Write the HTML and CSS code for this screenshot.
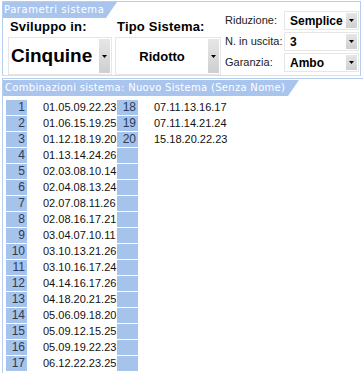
FILE: index.html
```html
<!DOCTYPE html>
<html lang="it">
<head>
    <meta charset="UTF-8">
    <title>Parametri sistema</title>
    <link rel="stylesheet" href="styles.css">
</head>
<body>
    <div class="params">
        <div class="params-main">
            <div class="tab tab-params">Parametri sistema</div>
            <div class="big-fields">
                <div class="field field-sviluppo">
                    <div class="field-label">Sviluppo in:</div>
                    <div class="combo combo-big">
                        <span class="combo-value value-left">Cinquine</span>
                        <span class="combo-btn"><svg width="5" height="3" viewBox="0 0 5 3"><path d="M0 0h5L2.5 3z" fill="#000"/></svg></span>
                    </div>
                </div>
                <div class="field field-tipo">
                    <div class="field-label">Tipo Sistema:</div>
                    <div class="combo combo-big">
                        <span class="combo-value value-center">Ridotto</span>
                        <span class="combo-btn"><svg width="5" height="3" viewBox="0 0 5 3"><path d="M0 0h5L2.5 3z" fill="#000"/></svg></span>
                    </div>
                </div>
            </div>
        </div>
        <div class="params-side">
            <span class="side-label">Riduzione:</span>
            <div class="combo combo-small">
                <span class="combo-value">Semplice</span>
                <span class="combo-btn"><svg width="5" height="3" viewBox="0 0 5 3"><path d="M0 0h5L2.5 3z" fill="#000"/></svg></span>
            </div>
            <span class="side-label">N. in uscita:</span>
            <div class="combo combo-small">
                <span class="combo-value">3</span>
                <span class="combo-btn"><svg width="5" height="3" viewBox="0 0 5 3"><path d="M0 0h5L2.5 3z" fill="#000"/></svg></span>
            </div>
            <span class="side-label">Garanzia:</span>
            <div class="combo combo-small">
                <span class="combo-value">Ambo</span>
                <span class="combo-btn"><svg width="5" height="3" viewBox="0 0 5 3"><path d="M0 0h5L2.5 3z" fill="#000"/></svg></span>
            </div>
        </div>
    </div>

    <div class="combos">
        <div class="tab tab-combos">Combinazioni sistema: Nuovo Sistema (Senza Nome)</div>
        <div class="combo-grid">
            <div class="idx">1</div><div class="num">01.05.09.22.23</div><div class="idx">18</div><div class="num">07.11.13.16.17</div>
            <div class="idx">2</div><div class="num">01.06.15.19.25</div><div class="idx">19</div><div class="num">07.11.14.21.24</div>
            <div class="idx">3</div><div class="num">01.12.18.19.20</div><div class="idx">20</div><div class="num">15.18.20.22.23</div>
            <div class="idx">4</div><div class="num">01.13.14.24.26</div><div class="idx"></div><div class="num"></div>
            <div class="idx">5</div><div class="num">02.03.08.10.14</div><div class="idx"></div><div class="num"></div>
            <div class="idx">6</div><div class="num">02.04.08.13.24</div><div class="idx"></div><div class="num"></div>
            <div class="idx">7</div><div class="num">02.07.08.11.26</div><div class="idx"></div><div class="num"></div>
            <div class="idx">8</div><div class="num">02.08.16.17.21</div><div class="idx"></div><div class="num"></div>
            <div class="idx">9</div><div class="num">03.04.07.10.11</div><div class="idx"></div><div class="num"></div>
            <div class="idx">10</div><div class="num">03.10.13.21.26</div><div class="idx"></div><div class="num"></div>
            <div class="idx">11</div><div class="num">03.10.16.17.24</div><div class="idx"></div><div class="num"></div>
            <div class="idx">12</div><div class="num">04.14.16.17.26</div><div class="idx"></div><div class="num"></div>
            <div class="idx">13</div><div class="num">04.18.20.21.25</div><div class="idx"></div><div class="num"></div>
            <div class="idx">14</div><div class="num">05.06.09.18.20</div><div class="idx"></div><div class="num"></div>
            <div class="idx">15</div><div class="num">05.09.12.15.25</div><div class="idx"></div><div class="num"></div>
            <div class="idx">16</div><div class="num">05.09.19.22.23</div><div class="idx"></div><div class="num"></div>
            <div class="idx">17</div><div class="num">06.12.22.23.25</div><div class="idx"></div><div class="num"></div>
        </div>
    </div>
</body>
</html>
```

FILE: styles.css
```css
body {
    margin: 0;
    background-color: #fff;
    font-family: "Liberation Sans", Arial, sans-serif;
    color: #000;
    width: 363px;
}

/* tabs */
.tab {
    background-color: #a9c5ee;
    color: #fff;
    font-family: "DejaVu Sans", Verdana, sans-serif;
    font-size: 10px;
    letter-spacing: 0.55px;
    height: 16px;
    line-height: 16px;
    padding-left: 1px;
    box-sizing: border-box;
    clip-path: polygon(0 0, 100% 0, calc(100% - 11px) 100%, 0 100%);
}

.tab-params {
    width: 114px;
}

.tab-combos {
    width: 296px;
    padding-left: 2px;
    letter-spacing: 0.3px;
}

/* parameters panel */
.params {
    display: flex;
    margin: 1px 0 0 2px;
    width: 357px;
    height: 73px;
    border: 1px solid #b6cdef;
    border-bottom-color: #d9dee6;
}

.params-main {
    width: 218px;
}

.big-fields {
    display: flex;
}

.field-label {
    font-size: 13px;
    font-weight: bold;
    letter-spacing: 0.2px;
    height: 16px;
    line-height: 16px;
    margin-top: 1px;
}

.field-sviluppo .field-label {
    padding-left: 7px;
}

.field-sviluppo .combo {
    margin-left: 5px;
    width: 104px;
}

.field-tipo {
    margin-left: 3px;
}

.field-tipo .field-label {
    padding-left: 2px;
}

.field-tipo .combo {
    width: 106px;
}

.combo {
    display: flex;
    align-items: stretch;
    box-sizing: border-box;
    border: 1px solid #e6e6e6;
    background-color: #fff;
}

.combo-big {
    height: 38px;
    margin-top: 2px;
}

.combo-value {
    flex: 1;
    display: flex;
    align-items: center;
    font-weight: bold;
}

.combo-big .value-left {
    font-size: 19px;
    padding-left: 2px;
}

.combo-big .value-center {
    font-size: 13px;
    justify-content: center;
}

.combo-btn {
    width: 11px;
    margin: 1px 1px 1px 0;
    background: linear-gradient(#e6e6e6, #cfcfcf);
    display: flex;
    align-items: center;
    justify-content: center;
}

/* side fields */
.params-side {
    display: grid;
    grid-template-columns: 59px 75px;
    grid-auto-rows: 19px;
    row-gap: 2px;
    padding: 9px 0 0 4px;
}

.side-label {
    font-size: 11px;
    line-height: 19px;
    color: #222;
}

.combo-small .combo-value {
    font-size: 12px;
    padding-left: 5px;
}

/* combinations list */
.combos {
    margin: 2px 0 0 2px;
    border-top: 1px solid #b6cdef;
    border-left: 1px solid #b6cdef;
    padding: 1px 0 2px 0;
}

.combo-grid {
    display: grid;
    grid-template-columns: 21px 90px 21px 1fr;
    grid-auto-rows: 15px;
    row-gap: 1px;
    margin: 4px 0 0 3px;
}

.idx {
    background-color: #a6c3ec;
    color: #2d3b57;
    font-size: 12px;
    line-height: 15px;
    text-align: right;
    padding-right: 2px;
}

.num {
    font-size: 11px;
    line-height: 15px;
    padding-left: 16px;
    color: #111;
}
```
